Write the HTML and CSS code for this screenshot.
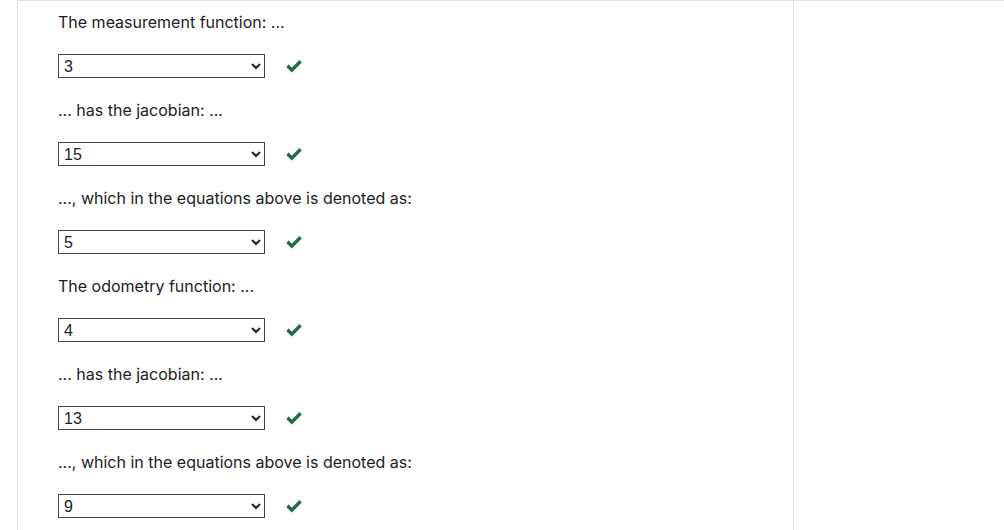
FILE: index.html
```html
<!DOCTYPE html>
<html>
<head>
<meta charset="utf-8">
<link rel="stylesheet" href="styles.css">
</head>
<body>
<div class="page">
  <div class="main">
    <div class="item">
      <p class="label">The measurement function: ...</p>
      <div class="answer">
        <select class="choice"><option>3</option></select>
        <svg class="check" viewBox="0 0 16 14"><polyline points="1.4,6.8 5.8,11.2 14.6,2.2"/></svg>
      </div>
    </div>
    <div class="item">
      <p class="label">... has the jacobian: ...</p>
      <div class="answer">
        <select class="choice"><option>15</option></select>
        <svg class="check" viewBox="0 0 16 14"><polyline points="1.4,6.8 5.8,11.2 14.6,2.2"/></svg>
      </div>
    </div>
    <div class="item">
      <p class="label">..., which in the equations above is denoted as:</p>
      <div class="answer">
        <select class="choice"><option>5</option></select>
        <svg class="check" viewBox="0 0 16 14"><polyline points="1.4,6.8 5.8,11.2 14.6,2.2"/></svg>
      </div>
    </div>
    <div class="item">
      <p class="label">The odometry function: ...</p>
      <div class="answer">
        <select class="choice"><option>4</option></select>
        <svg class="check" viewBox="0 0 16 14"><polyline points="1.4,6.8 5.8,11.2 14.6,2.2"/></svg>
      </div>
    </div>
    <div class="item">
      <p class="label">... has the jacobian: ...</p>
      <div class="answer">
        <select class="choice"><option>13</option></select>
        <svg class="check" viewBox="0 0 16 14"><polyline points="1.4,6.8 5.8,11.2 14.6,2.2"/></svg>
      </div>
    </div>
    <div class="item">
      <p class="label">..., which in the equations above is denoted as:</p>
      <div class="answer">
        <select class="choice"><option>9</option></select>
        <svg class="check" viewBox="0 0 16 14"><polyline points="1.4,6.8 5.8,11.2 14.6,2.2"/></svg>
      </div>
    </div>
  </div>
</div>
</body>
</html>
```

FILE: styles.css
```css
html, body {
  margin: 0;
  padding: 0;
  background: #fff;
}
body {
  font-family: Inter, "Noto Sans", sans-serif;
  color: #1d2125;
  height: 530px;
  overflow: hidden;
}
.page {
  margin-left: 17px;
  border-left: 1px solid #dee2e6;
  border-top: 1px solid #dee2e6;
  height: 529px;
  display: flex;
}
.main {
  width: 776px;
  border-right: 1px solid #dee2e6;
  padding-left: 40px;
  padding-top: 10px;
  box-sizing: border-box;
}
.item {
  display: flex;
  flex-direction: column;
}
.label {
  margin: 0;
  line-height: 22px;
  font-size: 16px;
  height: 22px;
}
.answer {
  margin-top: 21px;
  margin-bottom: 21px;
  display: flex;
  align-items: center;
  height: 24px;
}
.choice {
  width: 207px;
  height: 24px;
  font-family: "Liberation Sans", Arial, sans-serif;
  font-size: 16px;
  color: #1d2125;
  border: 1px solid #444;
  border-radius: 0;
  background: #fff;
  padding: 0 1px;
  margin: 0;
}
.check {
  width: 16px;
  height: 14px;
  margin-left: 21px;
  fill: none;
  stroke: #177245;
  stroke-width: 3.4;
  stroke-linecap: butt;
  stroke-linejoin: miter;
}
```
